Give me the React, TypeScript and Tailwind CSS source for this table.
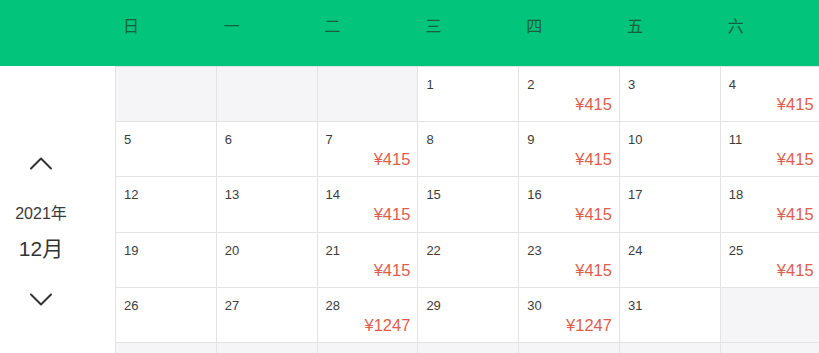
import React from 'react'

const WEEK = ['日', '一', '二', '三', '四', '五', '六']

type Day = { d?: number; price?: string }

const P = '¥415'
const P2 = '¥1247'

const ROWS: Day[][] = [
  [{}, {}, {}, { d: 1 }, { d: 2, price: P }, { d: 3 }, { d: 4, price: P }],
  [{ d: 5 }, { d: 6 }, { d: 7, price: P }, { d: 8 }, { d: 9, price: P }, { d: 10 }, { d: 11, price: P }],
  [{ d: 12 }, { d: 13 }, { d: 14, price: P }, { d: 15 }, { d: 16, price: P }, { d: 17 }, { d: 18, price: P }],
  [{ d: 19 }, { d: 20 }, { d: 21, price: P }, { d: 22 }, { d: 23, price: P }, { d: 24 }, { d: 25, price: P }],
  [{ d: 26 }, { d: 27 }, { d: 28, price: P2 }, { d: 29 }, { d: 30, price: P2 }, { d: 31 }, {}],
  [{}, {}, {}, {}, {}, {}, {}],
]

function Chevron({ up }: { up?: boolean }) {
  return (
    <svg width="24" height="14" viewBox="0 0 24 14" fill="none">
      <polyline
        points={up ? '2,12.5 12,2.5 22,12.5' : '2,1.5 12,11.5 22,1.5'}
        stroke="#333"
        strokeWidth="2"
        strokeLinecap="round"
        strokeLinejoin="round"
      />
    </svg>
  )
}

function Cell({ day }: { day: Day }) {
  const empty = day.d === undefined
  return (
    <div
      className={
        'h-[55.2px] border-l border-b border-[#e4e2e5] flex flex-col ' +
        (empty ? 'bg-[#f5f4f6]' : 'bg-white')
      }
    >
      {!empty && (
        <>
          <div className="pl-[8px] pt-[10px] text-[13px] leading-[16px] text-[#3c3c3c]">{day.d}</div>
          {day.price && (
            <div className="pr-[7px] mt-[1px] text-right text-[16.5px] leading-[20px] text-[#e05d4c]">{day.price}</div>
          )}
        </>
      )}
    </div>
  )
}

export default function App() {
  return (
    <div
      className="w-[819px] h-[353px] overflow-hidden bg-white"
      style={{ fontFamily: '"Liberation Sans", "Noto Sans CJK SC", sans-serif' }}
    >
      <div className="h-[66px] bg-[#02c47b] flex">
        <div className="w-[115px] shrink-0" />
        <div className="grid grid-cols-[repeat(7,100.8px)] shrink-0">
          {WEEK.map((w) => (
            <div key={w} className="pl-[8px] pt-[17px] text-[16px] leading-[20px] text-[#17603d]">
              {w}
            </div>
          ))}
        </div>
      </div>
      <div className="flex">
        <div className="w-[115px] shrink-0">
          <div className="w-[82px] flex flex-col items-center pt-[90px]">
            <Chevron up />
            <div className="mt-[34px] text-[16px] leading-[20px] text-[#3a3a3a]">2021年</div>
            <div className="mt-[12px] text-[21px] leading-[25px] text-[#333]">12月</div>
            <div className="mt-[32px]">
              <Chevron />
            </div>
          </div>
        </div>
        <div className="grid grid-cols-[repeat(7,100.8px)] shrink-0 border-t border-[#e4e2e5]">
          {ROWS.flat().map((day, i) => (
            <Cell key={i} day={day} />
          ))}
        </div>
      </div>
    </div>
  )
}
